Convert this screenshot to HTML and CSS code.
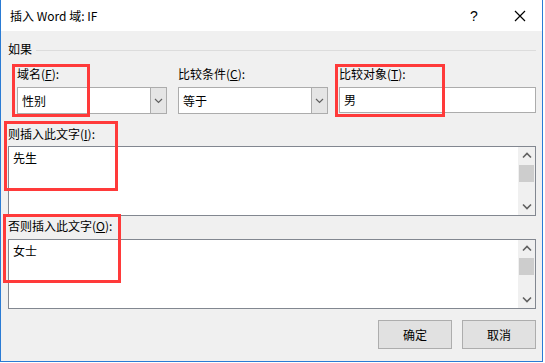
FILE: index.html
```html
<!DOCTYPE html>
<html lang="zh-CN">
<head>
    <meta charset="UTF-8">
    <title>插入 Word 域: IF</title>
    <link rel="stylesheet" href="styles.css">
</head>
<body>
    <div class="dialog">
        <div class="titlebar">
            <span class="title">插入 Word 域: IF</span>
            <span class="help">?</span>
            <span class="close">
                <svg width="12" height="12" viewBox="0 0 12 12"><path d="M1 1 L11 11 M11 1 L1 11" stroke="#000" stroke-width="1.2" fill="none"/></svg>
            </span>
        </div>

        <div class="content">
            <div class="group-head">
                <span>如果</span>
                <div class="group-line"></div>
            </div>

            <div class="fields">
                <div class="field field-name">
                    <label>域名(<u>F</u>):</label>
                    <div class="combo">
                        <span class="combo-text">性别</span>
                        <span class="combo-btn">
                            <svg width="9" height="6" viewBox="0 0 9 6"><path d="M1 1 L4.5 4.5 L8 1" stroke="#606060" stroke-width="1.2" fill="none"/></svg>
                        </span>
                    </div>
                </div>
                <div class="field field-cond">
                    <label>比较条件(<u>C</u>):</label>
                    <div class="combo">
                        <span class="combo-text">等于</span>
                        <span class="combo-btn">
                            <svg width="9" height="6" viewBox="0 0 9 6"><path d="M1 1 L4.5 4.5 L8 1" stroke="#606060" stroke-width="1.2" fill="none"/></svg>
                        </span>
                    </div>
                </div>
                <div class="field field-target">
                    <label>比较对象(<u>T</u>):</label>
                    <div class="textbox">男</div>
                </div>
            </div>

            <label class="area-label first">则插入此文字(<u>I</u>):</label>
            <div class="textarea">
                <div class="area-text">先生</div>
                <div class="scrollbar">
                    <svg class="arrow" width="10" height="7" viewBox="0 0 10 7"><path d="M1 5.5 L5 1.5 L9 5.5" stroke="#606060" stroke-width="1.6" fill="none"/></svg>
                    <div class="thumb"></div>
                    <div class="track"></div>
                    <svg class="arrow" width="10" height="7" viewBox="0 0 10 7"><path d="M1 1.5 L5 5.5 L9 1.5" stroke="#606060" stroke-width="1.6" fill="none"/></svg>
                </div>
            </div>

            <label class="area-label second">否则插入此文字(<u>O</u>):</label>
            <div class="textarea">
                <div class="area-text">女士</div>
                <div class="scrollbar">
                    <svg class="arrow" width="10" height="7" viewBox="0 0 10 7"><path d="M1 5.5 L5 1.5 L9 5.5" stroke="#606060" stroke-width="1.6" fill="none"/></svg>
                    <div class="thumb"></div>
                    <div class="track"></div>
                    <svg class="arrow" width="10" height="7" viewBox="0 0 10 7"><path d="M1 1.5 L5 5.5 L9 1.5" stroke="#606060" stroke-width="1.6" fill="none"/></svg>
                </div>
            </div>

            <div class="buttons">
                <button>确定</button>
                <button>取消</button>
            </div>
        </div>

        <!-- 标注用的红框 -->
        <div class="mark mark-name"></div>
        <div class="mark mark-target"></div>
        <div class="mark mark-then"></div>
        <div class="mark mark-else"></div>
    </div>
</body>
</html>
```

FILE: styles.css
```css
body {
    margin: 0;
    background: #ffffff;
    font-family: "Noto Sans CJK SC", "Noto Sans", sans-serif;
    font-size: 12px;
    color: #000;
}
.dialog {
    position: relative;
    width: 543px;
    height: 362px;
    box-sizing: border-box;
    border: 1px solid #2a7bd4;
    border-top: none;
    background: #f0f0f0;
    display: flex;
    flex-direction: column;
}
.titlebar {
    height: 31px;
    background: #ffffff;
    display: flex;
    align-items: center;
    padding-left: 9px;
    line-height: 16px;
}
.title {
    flex: 1;
    font-size: 12px;
}
.help {
    width: 12px;
    margin-right: 34px;
    font-family: "Liberation Sans", sans-serif;
    font-size: 14px;
    text-align: center;
}
.close {
    width: 12px;
    height: 12px;
    margin-right: 16px;
    display: flex;
}
.content {
    flex: 1;
    padding: 10px 6px 0 7px;
}
.group-head {
    display: flex;
    align-items: center;
    line-height: 16px;
    gap: 4px;
}
.group-line {
    flex: 1;
    height: 1px;
    background: #dcdcdc;
    margin-top: 3px;
}
.fields {
    display: flex;
    gap: 11px;
    padding-left: 9px;
    margin-top: 9px;
}
.field label {
    display: block;
    line-height: 16px;
    margin-bottom: 5px;
}
.field-name, .field-cond {
    width: 150px;
}
.field-target {
    flex: 1;
}
.combo {
    height: 27px;
    box-sizing: border-box;
    border: 1px solid #acacac;
    background: #ffffff;
    display: flex;
}
.combo-text {
    flex: 1;
    padding-left: 4px;
    line-height: 25px;
}
.combo-btn {
    width: 15px;
    background: #e5e5e5;
    border-left: 1px solid #acacac;
    display: flex;
    align-items: center;
    justify-content: center;
}
.textbox {
    height: 26px;
    box-sizing: border-box;
    border: 1px solid #acacac;
    background: #ffffff;
    padding-left: 4px;
    line-height: 24px;
}
.area-label {
    display: block;
    line-height: 16px;
    margin-bottom: 4px;
}
.area-label.first {
    margin-top: 12px;
}
.area-label.second {
    margin-top: 2px;
    margin-bottom: 5px;
}
.textarea {
    height: 70px;
    box-sizing: border-box;
    border: 1px solid #828790;
    background: #ffffff;
    display: flex;
}
.area-text {
    flex: 1;
    padding: 3px 0 0 4px;
    line-height: 16px;
}
.scrollbar {
    width: 17px;
    background: #f0f0f0;
    display: flex;
    flex-direction: column;
    align-items: center;
}
.arrow {
    margin: 5px 0;
}
.thumb {
    width: 15px;
    height: 17px;
    background: #cdcdcd;
    margin-top: 1px;
}
.track {
    flex: 1;
}
.buttons {
    display: flex;
    justify-content: flex-end;
    gap: 10px;
    margin-top: 11px;
}
button {
    width: 74px;
    height: 29px;
    background: #e1e1e1;
    border: 1px solid #adadad;
    font-family: "Noto Sans CJK SC", sans-serif;
    font-size: 12px;
    color: #000;
    padding: 0;
}
.mark {
    position: absolute;
    border: 3px solid #ff3a3a;
    box-sizing: border-box;
}
.mark-name {
    left: 11px;
    top: 64px;
    width: 78px;
    height: 53px;
}
.mark-target {
    left: 334px;
    top: 64px;
    width: 110px;
    height: 53px;
}
.mark-then {
    left: 3px;
    top: 121px;
    width: 114px;
    height: 70px;
}
.mark-else {
    left: 2px;
    top: 214px;
    width: 118px;
    height: 69px;
}
```
